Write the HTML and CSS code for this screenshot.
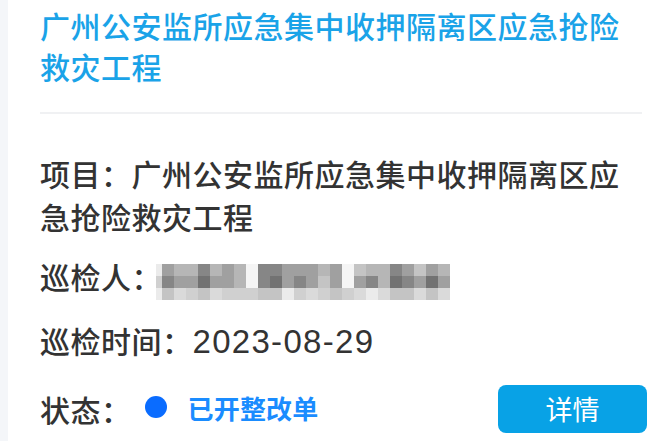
FILE: index.html
```html
<!DOCTYPE html>
<html lang="zh-CN">
<head>
<meta charset="utf-8">
<title>巡检详情</title>
<link rel="stylesheet" href="styles.css">
</head>
<body>
<div class="page">
  <div class="card">
    <h1 class="title">广州公安监所应急集中收押隔离区应急抢险救灾工程</h1>
    <div class="divider"></div>
    <div class="field project">项目：广州公安监所应急集中收押隔离区应急抢险救灾工程</div>
    <div class="field inspector">
      <span class="label">巡检人：</span>
      <div class="mosaic">
        <i class="c8"></i><i class="c3"></i><i class="c4"></i><i class="c4"></i><i class="c2"></i><i class="c4"></i><i class="c3"></i><i class="c4"></i><i class="c9"></i><i class="c2"></i><i class="c2"></i><i class="c3"></i><i class="c3"></i><i class="c3"></i><i class="c4"></i><i class="c3"></i><i class="c9"></i><i class="c5"></i><i class="c4"></i><i class="c4"></i><i class="c2"></i><i class="c3"></i><i class="c5"></i><i class="c3"></i><i class="c4"></i>
        <i class="c6"></i><i class="c2"></i><i class="c3"></i><i class="c3"></i><i class="c1"></i><i class="c3"></i><i class="c3"></i><i class="c4"></i><i class="c9"></i><i class="c2"></i><i class="c1"></i><i class="c3"></i><i class="c2"></i><i class="c3"></i><i class="c5"></i><i class="c3"></i><i class="c9"></i><i class="c3"></i><i class="c2"></i><i class="c4"></i><i class="c1"></i><i class="c2"></i><i class="c3"></i><i class="c1"></i><i class="c3"></i>
        <i class="c8"></i><i class="c5"></i><i class="c7"></i><i class="c6"></i><i class="c5"></i><i class="c7"></i><i class="c6"></i><i class="c6"></i><i class="c6"></i><i class="c5"></i><i class="c5"></i><i class="c8"></i><i class="c6"></i><i class="c7"></i><i class="c6"></i><i class="c5"></i><i class="c6"></i><i class="c7"></i><i class="c8"></i><i class="c7"></i><i class="c5"></i><i class="c5"></i><i class="c7"></i><i class="c5"></i><i class="c7"></i>
      </div>
    </div>
    <div class="field time">巡检时间：<span class="date">2023-08-29</span></div>
    <div class="field status">
      <span class="label">状态：</span>
      <span class="dot"></span>
      <span class="state">已开整改单</span>
      <button class="detail" type="button">详情</button>
    </div>
  </div>
</div>
</body>
</html>
```
FILE: styles.css
```css
html, body {
  margin: 0;
  padding: 0;
  background: #f4f6f9;
}
.page {
  padding-left: 8px;
  height: 441px;
  overflow: hidden;
}
.card {
  background: #ffffff;
  height: 441px;
  padding: 5px 5px 0 32px;
  box-sizing: border-box;
  font-family: "Noto Sans CJK SC", "Noto Sans", sans-serif;
  color: #333333;
}
.title {
  margin: 0;
  font-size: 30px;
  letter-spacing: 0.5px;
  line-height: 41px;
  font-weight: 500;
  color: #1aa3e8;
}
.divider {
  height: 2px;
  background: #f0f1f3;
  margin: 25px 5px 0 0;
}
.field {
  font-size: 30px;
  letter-spacing: 0.5px;
  line-height: 43px;
  font-weight: 500;
}
.project {
  margin-top: 38px;
}
.inspector {
  display: flex;
  align-items: flex-start;
  margin-top: 17px;
}
.mosaic {
  display: grid;
  grid-template-columns: 6px repeat(24, 12px);
  grid-auto-rows: 12px;
  margin-top: 9px;
  margin-left: -6px;
}
.mosaic i { display: block; }
.c1 { background: #727272; }
.c2 { background: #868686; }
.c3 { background: #a0a0a0; }
.c4 { background: #b6b6b6; }
.c5 { background: #c4c4c4; }
.c6 { background: #d0d0d0; }
.c7 { background: #dadada; }
.c8 { background: #ebebeb; }
.c9 { background: #f5f5f5; }
.time {
  margin-top: 19px;
}
.date {
  font-family: "Liberation Sans", Arial, sans-serif;
  font-size: 33px;
  letter-spacing: 1.3px;
  font-weight: 400;
  color: #333333;
}
.status {
  display: flex;
  align-items: center;
  height: 48px;
  margin-top: 22px;
}
.dot {
  width: 22px;
  height: 22px;
  border-radius: 50%;
  background: #0a6cff;
  margin-left: 13px;
  margin-top: -4px;
}
.state {
  margin-left: 21px;
  font-size: 26px;
  letter-spacing: 0.2px;
  font-weight: 700;
  color: #1a8cff;
  margin-top: -4px;
}
.detail {
  margin-left: auto;
  width: 149px;
  height: 48px;
  border: none;
  border-radius: 8px;
  background: #08a2e6;
  color: #ffffff;
  font-family: "Noto Sans CJK SC", "Noto Sans", sans-serif;
  font-size: 27px;
  font-weight: 400;
  padding: 0;
  line-height: 48px;
}
```
